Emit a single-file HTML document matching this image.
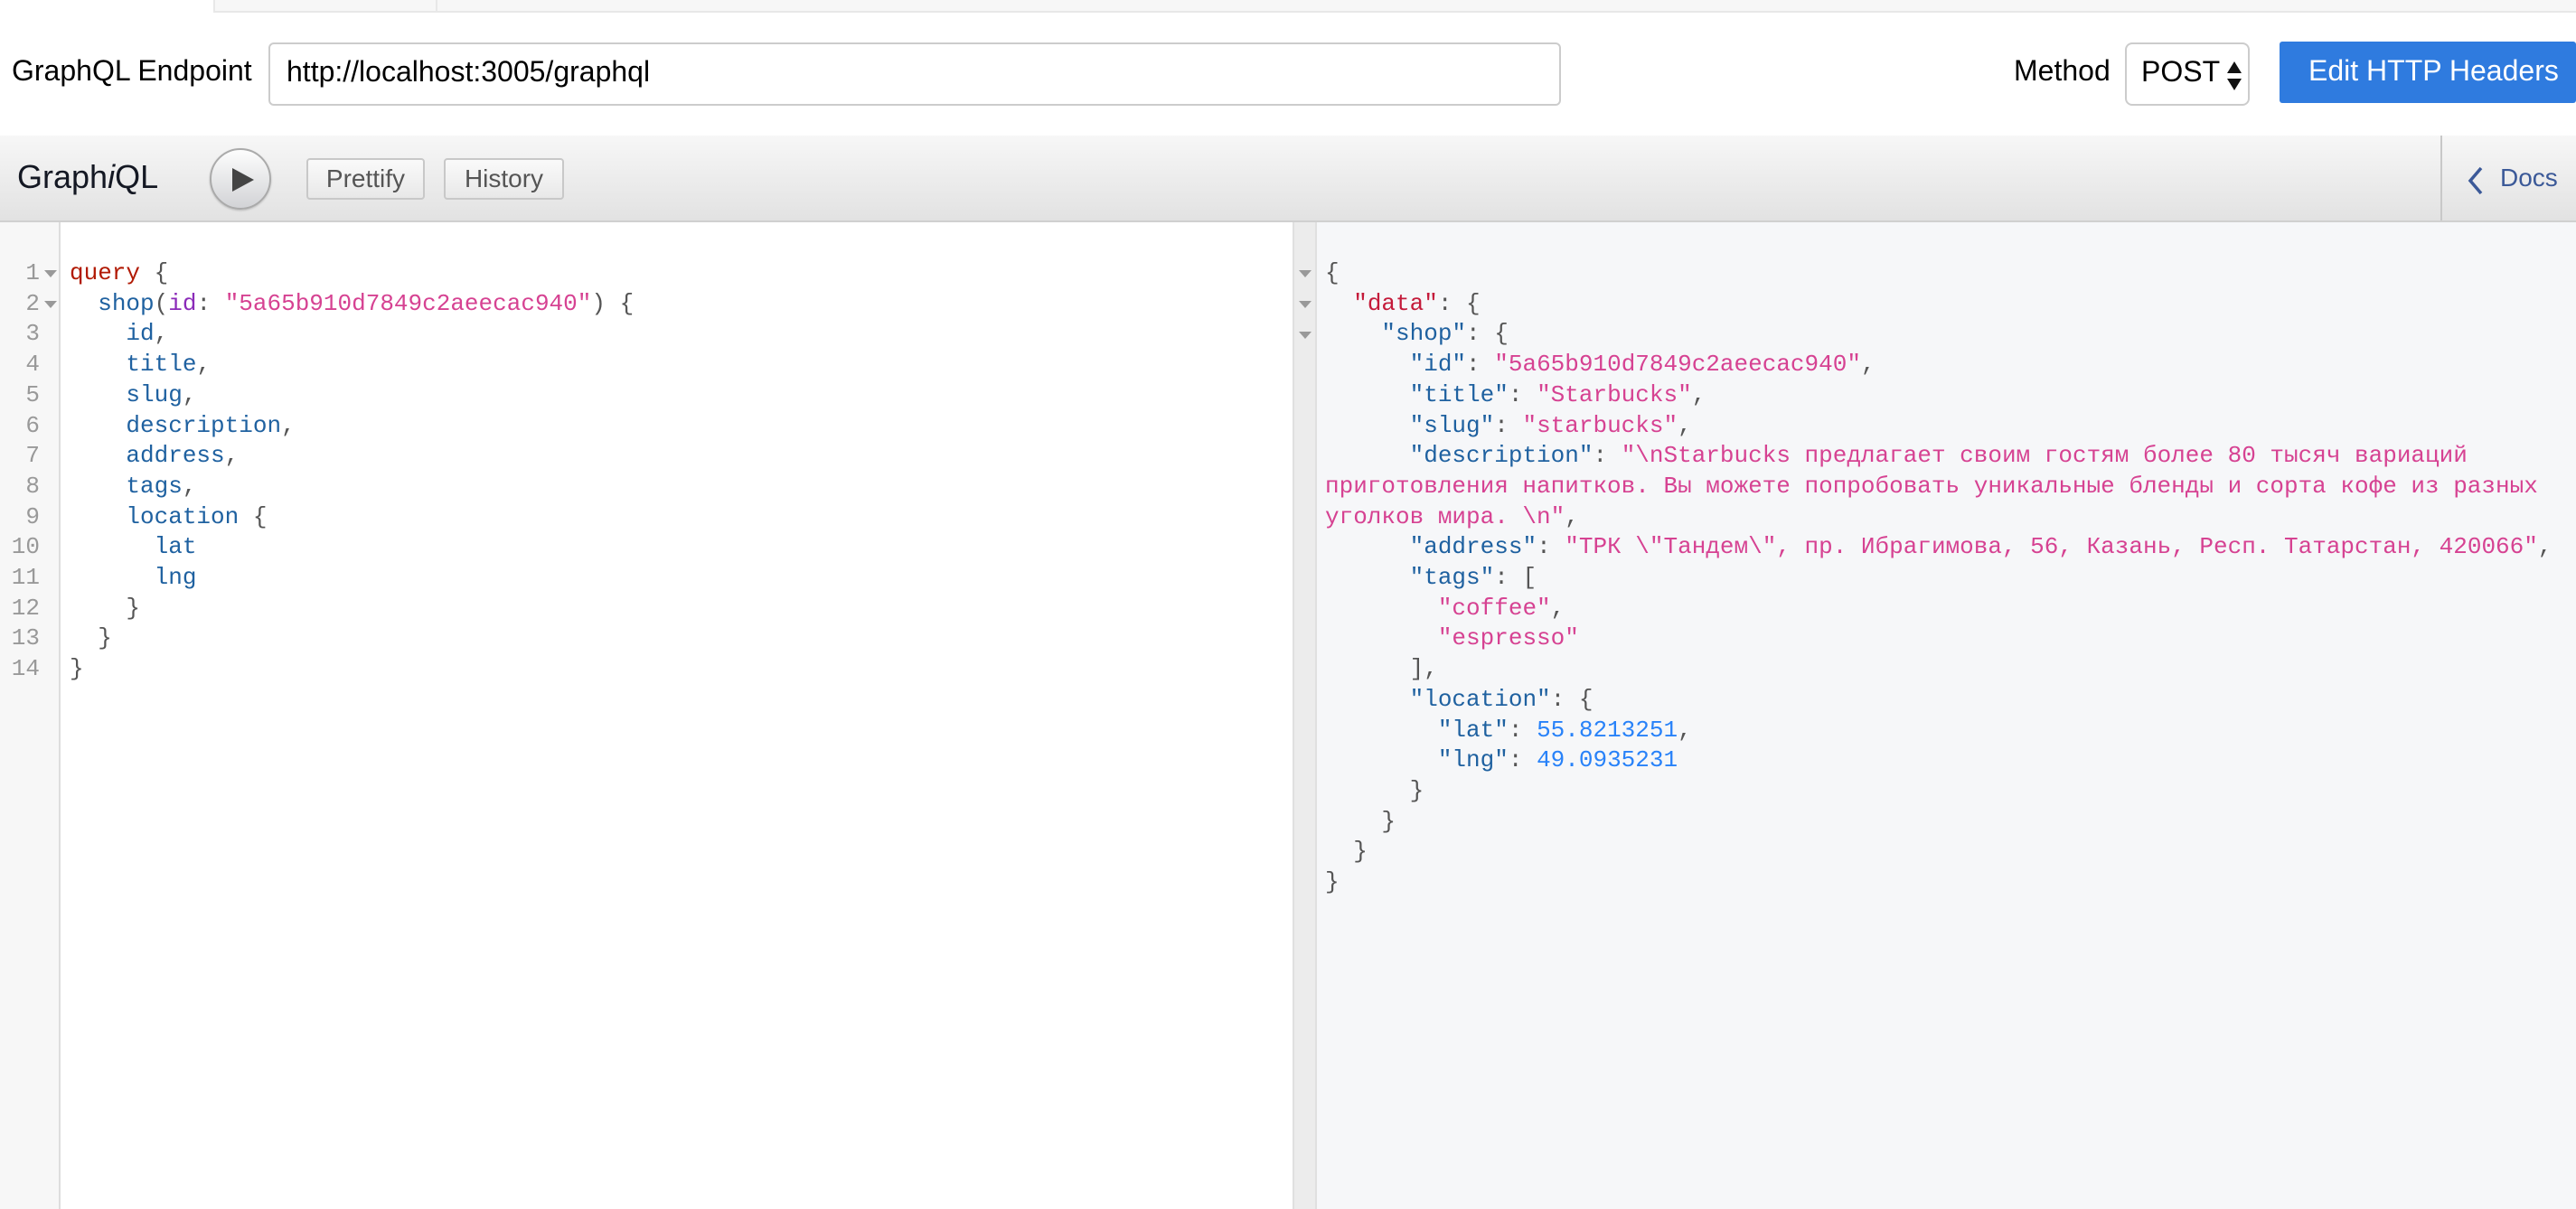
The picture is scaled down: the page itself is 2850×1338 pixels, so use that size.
<!DOCTYPE html>
<html><head><meta charset="utf-8"><style>
*{margin:0;padding:0;box-sizing:border-box}
body{width:2850px;height:1338px;overflow:hidden;background:#fff;font-family:"Liberation Sans",Arial,sans-serif;position:relative}
.abs{position:absolute}
.mono{font-family:"Liberation Mono","DejaVu Sans Mono",monospace;font-size:26px;line-height:33.7px;white-space:pre}
.k{color:#1f61a0}.s{color:#d64292}.n{color:#2882f9}.p{color:#555}.q{color:#b11a04}.a{color:#8b2bb9}.r{color:#c41a3a}
.btn{position:absolute;top:175px;height:46px;border:2px solid #c8c8c8;border-radius:4px;background:linear-gradient(#fafafa,#e8e8e8);color:#555;font-size:28px;line-height:42px;text-align:center}
</style></head><body>
<div class="abs" style="left:236px;top:0;width:2614px;height:14px;background:#f7f7f7;border-bottom:2px solid #e8e8e8;border-left:2px solid #e8e8e8"></div>
<div class="abs" style="left:482px;top:0;width:2px;height:12px;background:#e8e8e8"></div>

<div class="abs" style="left:13px;top:60px;font-size:32px;color:#000">GraphQL Endpoint</div>
<div class="abs" style="left:297px;top:47px;width:1430px;height:70px;border:2px solid #ccc;border-radius:6px;background:#fff"></div>
<div class="abs" style="left:317px;top:61px;font-size:32px;color:#000">http://localhost:3005/graphql</div>
<div class="abs" style="left:2228px;top:60px;font-size:32px;color:#000">Method</div>
<div class="abs" style="left:2351px;top:47px;width:138px;height:70px;border:2px solid #ccc;border-radius:8px;background:#fff"></div>
<div class="abs" style="left:2369px;top:61px;font-size:32px;color:#000">POST</div>
<svg class="abs" style="left:2463px;top:68px" width="18" height="32"><path d="M9 0L17 13H1Z M1 19H17L9 32Z" fill="#111"/></svg>
<div class="abs" style="left:2522px;top:46px;width:328px;height:68px;background:#2f7bdf;border-radius:3px"></div>
<div class="abs" style="left:2554px;top:60px;font-size:32px;color:#fff">Edit HTTP Headers</div>

<div class="abs" style="left:0;top:150px;width:2850px;height:96px;background:linear-gradient(#f7f7f7,#e2e2e2);border-bottom:2px solid #d0d0d0"></div>
<div class="abs" style="left:19px;top:175px;font-size:36px;color:#141823">Graph<i>i</i>QL</div>
<div class="abs" style="left:232px;top:164px;width:68px;height:68px;border-radius:50%;border:2px solid #aaa;background:linear-gradient(#fdfdfd,#d2d3d6);box-shadow:0 1px 2px rgba(0,0,0,.2)"></div>
<svg class="abs" style="left:255px;top:185px" width="28" height="28"><path d="M2 1L26 14L2 27Z" fill="#444"/></svg>
<div class="btn" style="left:339px;width:131px">Prettify</div>
<div class="btn" style="left:491px;width:133px">History</div>
<div class="abs" style="left:2700px;top:150px;width:2px;height:94px;background:#c8c8c8"></div>
<svg class="abs" style="left:2730px;top:184px" width="18" height="32"><path d="M15 2L3 16L15 30" stroke="#3b5998" stroke-width="3.5" fill="none"/></svg>
<div class="abs" style="left:2766px;top:181px;font-size:28px;color:#3b5998">Docs</div>

<!-- left editor -->
<div class="abs" style="left:0;top:246px;width:67px;height:1092px;background:#f7f7f7;border-right:2px solid #ddd"></div>
<div class="abs mono" style="left:0;top:286px;width:44px;text-align:right;color:#999">1
2
3
4
5
6
7
8
9
10
11
12
13
14</div>
<svg class="abs" style="left:48px;top:297px" width="16" height="50"><path d="M1 2H15L8 10Z M1 36H15L8 44Z" fill="#999"/></svg>
<div class="abs mono" style="left:77px;top:286px"><span class="q">query</span> <span class="p">{</span>
  <span class="k">shop</span><span class="p">(</span><span class="a">id</span><span class="p">:</span> <span class="s">"5a65b910d7849c2aeecac940"</span><span class="p">) {</span>
    <span class="k">id</span><span class="p">,</span>
    <span class="k">title</span><span class="p">,</span>
    <span class="k">slug</span><span class="p">,</span>
    <span class="k">description</span><span class="p">,</span>
    <span class="k">address</span><span class="p">,</span>
    <span class="k">tags</span><span class="p">,</span>
    <span class="k">location</span> <span class="p">{</span>
      <span class="k">lat</span>
      <span class="k">lng</span>
    <span class="p">}</span>
  <span class="p">}</span>
<span class="p">}</span></div>

<!-- results -->
<div class="abs" style="left:1430px;top:246px;width:1420px;height:1092px;background:#f6f7f9"></div>
<div class="abs" style="left:1430px;top:246px;width:27px;height:1092px;background:#ececec;border-left:2px solid #e0e0e0;border-right:2px solid #e0e0e0"></div>
<svg class="abs" style="left:1436px;top:297px" width="16" height="84"><path d="M1 2H15L8 10Z M1 36H15L8 44Z M1 70H15L8 78Z" fill="#999"/></svg>
<div class="abs mono" style="left:1466px;top:286px"><span class="p">{</span>
  <span class="r">"data"</span><span class="p">: {</span>
    <span class="k">"shop"</span><span class="p">: {</span>
      <span class="k">"id"</span><span class="p">:</span> <span class="s">"5a65b910d7849c2aeecac940"</span><span class="p">,</span>
      <span class="k">"title"</span><span class="p">:</span> <span class="s">"Starbucks"</span><span class="p">,</span>
      <span class="k">"slug"</span><span class="p">:</span> <span class="s">"starbucks"</span><span class="p">,</span>
      <span class="k">"description"</span><span class="p">:</span> <span class="s">"\nStarbucks предлагает своим гостям более 80 тысяч вариаций</span>
<span class="s">приготовления напитков. Вы можете попробовать уникальные бленды и сорта кофе из разных</span>
<span class="s">уголков мира. \n"</span><span class="p">,</span>
      <span class="k">"address"</span><span class="p">:</span> <span class="s">"ТРК \"Тандем\", пр. Ибрагимова, 56, Казань, Респ. Татарстан, 420066"</span><span class="p">,</span>
      <span class="k">"tags"</span><span class="p">: [</span>
        <span class="s">"coffee"</span><span class="p">,</span>
        <span class="s">"espresso"</span>
      <span class="p">],</span>
      <span class="k">"location"</span><span class="p">: {</span>
        <span class="k">"lat"</span><span class="p">:</span> <span class="n">55.8213251</span><span class="p">,</span>
        <span class="k">"lng"</span><span class="p">:</span> <span class="n">49.0935231</span>
      <span class="p">}</span>
    <span class="p">}</span>
  <span class="p">}</span>
<span class="p">}</span></div>
</body></html>
